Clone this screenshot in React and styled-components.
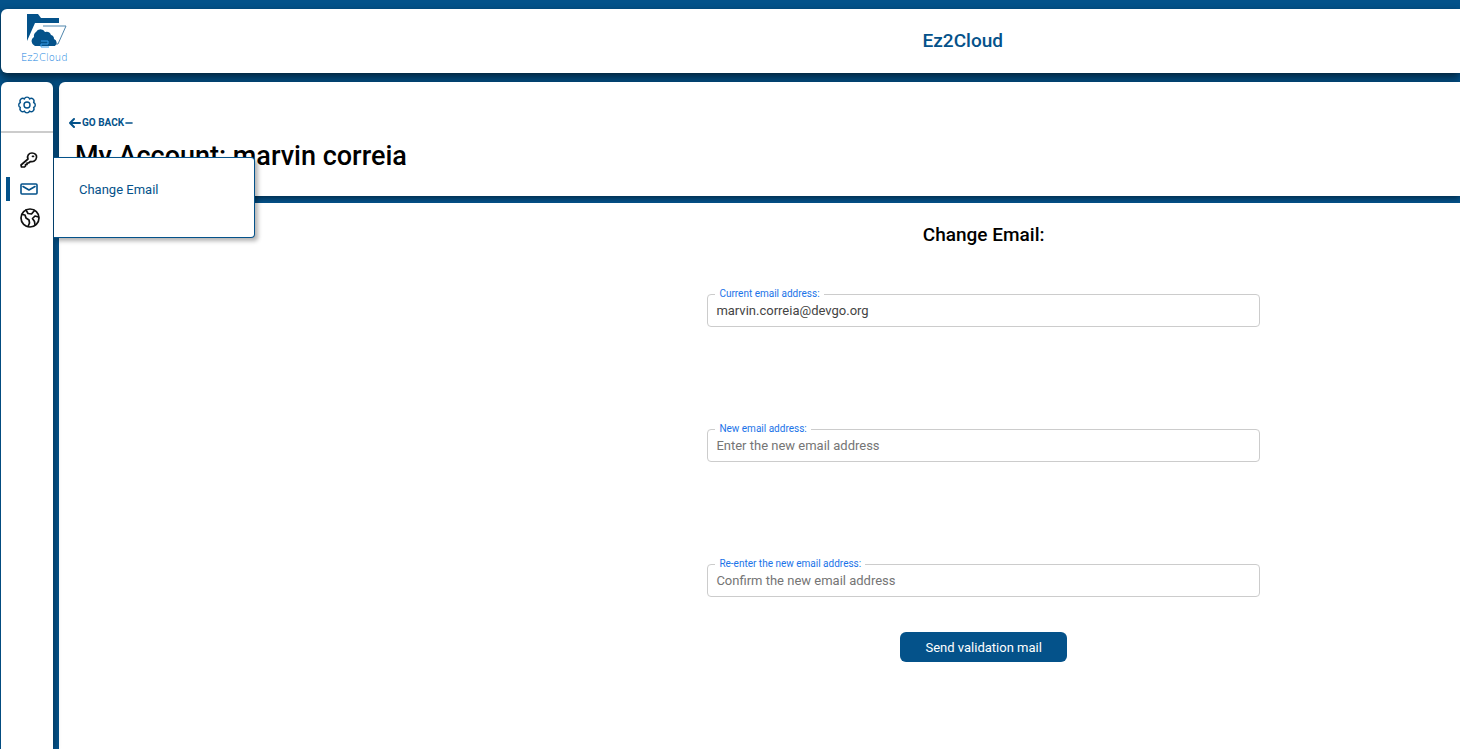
import React from "react";
import styled, { createGlobalStyle } from "styled-components";

const blue = "#04528a";

const GlobalStyle = createGlobalStyle`
  *, *::before, *::after { box-sizing: border-box; }
  body { margin: 0; background: ${blue}; color: #000; font-family: Roboto, "Liberation Sans", sans-serif; }
`;

const Shell = styled.div`
  display: flex;
  flex-direction: column;
  gap: 9px;
  min-height: 100vh;
  padding: 9px 0 0 1px;
`;

const Header = styled.header`
  display: flex;
  align-items: center;
  gap: 8px;
  height: 64px;
  padding-left: 20px;
  border-radius: 6px 0 0 6px;
  background: #fff;
  box-shadow: 0 4px 8px rgba(0, 0, 0, 0.6);
`;

const LogoLink = styled.a`
  display: block;
  width: 48px;
  height: 56px;
`;

const AppName = styled.h1`
  flex: 1;
  margin: 0;
  padding-left: 27%;
  color: ${blue};
  font-size: 19px;
  line-height: 24px;
  font-weight: 500;
  text-align: center;
`;

const Body = styled.div`
  display: flex;
  flex: 1;
  gap: 6px;
`;

const Sidebar = styled.nav`
  position: relative;
  z-index: 1;
  width: 52px;
  border-radius: 6px 6px 0 0;
  background: #fff;
  box-shadow: 2px 0 6px rgba(0, 0, 0, 0.3);
`;

const SettingsLink = styled.a`
  display: flex;
  align-items: center;
  justify-content: center;
  height: 51px;
  padding-bottom: 4px;
  border-bottom: 2px solid #ccc;
  color: ${blue};
`;

const NavList = styled.ul`
  display: flex;
  flex-direction: column;
  gap: 1px;
  margin: 0;
  padding: 13px 0 0 5px;
  list-style: none;
`;

const NavItem = styled.li`
  position: relative;
  padding: 2px 0;
`;

const NavLink = styled.a`
  display: flex;
  align-items: center;
  width: 47px;
  height: 24px;
  padding-left: 10px;
  border-left: 4px solid ${(p) => (p.$active ? blue : "transparent")};
  color: ${(p) => (p.$active ? blue : "#111")};
`;

const Flyout = styled.div`
  position: absolute;
  top: -18px;
  left: 48px;
  width: 201px;
  height: 81px;
  padding: 24px 25px;
  border: 1px solid ${blue};
  border-left: 0;
  border-radius: 0 4px 4px 0;
  background: #fff;
  box-shadow: 3px 3px 4px rgba(0, 0, 0, 0.3);
  color: ${blue};
  font-size: 13px;
  line-height: 16px;
`;

const Main = styled.main`
  display: flex;
  flex: 1;
  flex-direction: column;
  gap: 7px;
`;

const AccountBar = styled.section`
  display: flex;
  flex-direction: column;
  align-items: flex-start;
  height: 114px;
  padding: 34px 10px 0;
  border-radius: 6px 0 0 0;
  background: #fff;
  box-shadow: 0 2px 6px rgba(0, 0, 0, 0.5);
`;

const BackLink = styled.a`
  display: flex;
  align-items: center;
  gap: 1px;
  color: ${blue};
  font-size: 10px;
  line-height: 14px;
  font-weight: 700;
  text-decoration: none;
`;

const AccountTitle = styled.h2`
  margin: 9px 6px 0;
  font-size: 27px;
  line-height: 34px;
  font-weight: 500;
`;

const FormPanel = styled.form`
  display: flex;
  flex: 1;
  flex-direction: column;
  align-items: center;
  padding: 20px 0 0 32%;
  background: #fff;
`;

const FormTitle = styled.h3`
  margin: 0 0 41px;
  font-size: 19px;
  line-height: 24px;
  font-weight: 500;
`;

const Field = styled.div`
  position: relative;
  width: 58%;
  padding-top: 6px;
  margin-bottom: ${(p) => (p.$last ? 35 : 96)}px;
`;

const Label = styled.label`
  position: absolute;
  top: 0;
  left: 8px;
  padding: 0 4px;
  background: #fff;
  color: #1a73e8;
  font-size: 10px;
  line-height: 12px;
`;

const Input = styled.input`
  display: block;
  width: 100%;
  height: 33px;
  padding: 0 8px;
  border: 1px solid #ccc;
  border-radius: 4px;
  outline: 0;
  background: #fff;
  color: #444;
  font-family: inherit;
  font-size: 13px;
  &::placeholder { color: #757575; }
`;

const SubmitButton = styled.button`
  height: 30px;
  padding: 0 25px;
  border: 0;
  border-radius: 6px;
  background: ${blue};
  color: #fff;
  font-family: inherit;
  font-size: 13px;
`;

const LogoWord = styled.text`
  fill: #0f7fe0;
  font-family: "DejaVu Sans", sans-serif;
  font-weight: 200;
  font-size: 10px;
`;

function Logo() {
  return (
    <svg width="48" height="56" viewBox="0 0 48 56" role="img" aria-label="Ez2Cloud">
      <path d="M6 28V1h11l3 4h18v5H14z" fill={blue} />
      <path d="M22 13h23L37 31h-2" fill="none" stroke="#4f86ad" strokeWidth="1" />
      <path d="M14 33a5 5 0 0 1-1-9 5 5 0 0 1 2-5 5 5 0 0 1 9 0 5 5 0 0 1 6 3 4 4 0 0 1 3 4 4 4 0 0 1 1 7z" fill={blue} />
      <path d="M20 28h7v3h-7v3h8" fill="none" stroke="#369be8" strokeWidth="1" />
      <LogoWord x="0" y="48">Ez2Cloud</LogoWord>
    </svg>
  );
}

const Icon = styled.svg`
  display: block;
  flex: none;
  fill: none;
  stroke: currentColor;
  stroke-linecap: round;
  stroke-linejoin: round;
`;

function GearIcon() {
  return (
    <Icon width="20" height="18" viewBox="-10 -9 20 18" strokeWidth="1.4" aria-hidden="true">
      <circle r="3" />
      <path d="M-2.600-6A2.700 2.500 0 0 1 2.600-6A2.700 2.700 0 0 1 6.600-2.500A2.700 2.700 0 0 1 6.600 2.500A2.700 2.700 0 0 1 2.600 6A2.700 2.500 0 0 1-2.600 6A2.700 2.700 0 0 1-6.600 2.500A2.700 2.700 0 0 1-6.600-2.500A2.700 2.700 0 0 1-2.600-6Z" />
    </Icon>
  );
}

function KeyIcon() {
  return (
    <Icon width="18" height="16" viewBox="0 0 18 16" strokeWidth="1.7" aria-hidden="true">
      <path d="M8 7C6.600 3.500 9 1 12 1c3 0 5 2 4.500 4.500C16 9 13 10 10.500 9.500L8.500 11H7v1.500H5.500V14L4.500 15H1.500L1 13z" />
      <path d="M12.500 4.300h1" />
    </Icon>
  );
}

function MailIcon() {
  return (
    <Icon width="18" height="12" viewBox="0 0 18 12" strokeWidth="1.6" aria-hidden="true">
      <rect x="1" y="1" width="16" height="10" rx="1" />
      <path d="M3 3.500 9 7l6-3.500" />
    </Icon>
  );
}

function GlobeIcon() {
  return (
    <Icon width="20" height="20" viewBox="-10 -10 20 20" strokeWidth="1.7" aria-hidden="true">
      <circle r="9" />
      <path d="M-8-3.500l3 .5 1 3 3 2 .5 3-1.500 3.500" />
      <path d="M-4-8l2 3.500 3.500.5 3-3.500" />
      <path d="M8.500-1 5-2 2.500.5l2 3 .5 3.500" />
    </Icon>
  );
}

function BackArrow() {
  return (
    <Icon width="12" height="12" viewBox="0 0 12 12" strokeWidth="2" aria-hidden="true">
      <path d="M11 6H1M5 2 1 6l4 4" />
    </Icon>
  );
}

function Dash() {
  return (
    <Icon width="8" height="12" viewBox="0 0 8 12" strokeWidth="1.6" aria-hidden="true">
      <path d="M1 6h6" />
    </Icon>
  );
}

function EmailField({ id, label, last, ...input }) {
  return (
    <Field $last={last}>
      <Input id={id} type="email" {...input} />
      <Label htmlFor={id}>{label}</Label>
    </Field>
  );
}

export default function App() {
  return (
    <>
      <GlobalStyle />
      <Shell>
        <Header>
          <LogoLink href="#home"><Logo /></LogoLink>
          <AppName>Ez2Cloud</AppName>
        </Header>
        <Body>
          <Sidebar aria-label="Account">
            <SettingsLink href="#settings" aria-label="Settings"><GearIcon /></SettingsLink>
            <NavList>
              <NavItem><NavLink href="#password" aria-label="Change password"><KeyIcon /></NavLink></NavItem>
              <NavItem>
                <NavLink $active href="#email" aria-label="Change Email"><MailIcon /></NavLink>
                <Flyout role="tooltip">Change Email</Flyout>
              </NavItem>
              <NavItem><NavLink href="#language" aria-label="Language"><GlobeIcon /></NavLink></NavItem>
            </NavList>
          </Sidebar>
          <Main>
            <AccountBar>
              <BackLink href="#back"><BackArrow />GO BACK<Dash /></BackLink>
              <AccountTitle>My Account: marvin correia</AccountTitle>
            </AccountBar>
            <FormPanel>
              <FormTitle>Change Email:</FormTitle>
              <EmailField id="current" label="Current email address:" defaultValue="marvin.correia@devgo.org" />
              <EmailField id="new" label="New email address:" placeholder="Enter the new email address" />
              <EmailField id="confirm" label="Re-enter the new email address:" placeholder="Confirm the new email address" last />
              <SubmitButton type="button">Send validation mail</SubmitButton>
            </FormPanel>
          </Main>
        </Body>
      </Shell>
    </>
  );
}
